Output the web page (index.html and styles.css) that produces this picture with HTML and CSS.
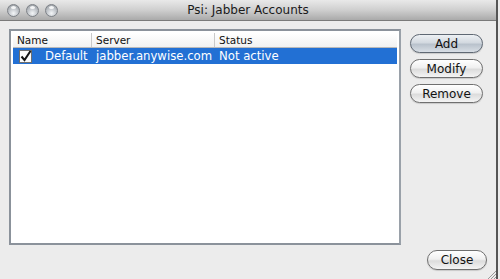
FILE: index.html
```html
<!DOCTYPE html>
<html>
<head>
  <title>Psi: Jabber Accounts</title>
  <meta charset="UTF-8">
  <link rel="stylesheet" href="styles.css">
</head>
<body>
  <div class="window">
    <div class="titlebar">
      <div class="lights">
        <span class="light"></span>
        <span class="light"></span>
        <span class="light"></span>
      </div>
      <div class="title">Psi: Jabber Accounts</div>
    </div>
    <div class="content">
      <div class="table-box">
        <div class="row header">
          <div class="cell col-name">Name</div>
          <div class="cell col-server">Server</div>
          <div class="cell col-status">Status</div>
        </div>
        <div class="row selected">
          <div class="cell col-name">
            <svg class="check" width="13" height="13" viewBox="0 0 13 13">
              <rect x="0.5" y="0.5" width="12" height="12" fill="#fafafa" stroke="#6e6e6e"/>
              <path d="M2.5 6.5 L5.5 10 L11.5 1" fill="none" stroke="#111" stroke-width="2"/>
            </svg>
            <span class="name">Default</span>
          </div>
          <div class="cell col-server">jabber.anywise.com</div>
          <div class="cell col-status">Not active</div>
        </div>
      </div>
      <div class="buttons">
        <button class="button default">Add</button>
        <button class="button">Modify</button>
        <button class="button">Remove</button>
      </div>
    </div>
    <div class="footer">
      <button class="button close">Close</button>
    </div>
    <svg class="grip" width="10" height="10" viewBox="0 0 10 10">
      <path d="M10 2 L2 10 M10 5 L5 10 M10 8 L8 10" stroke="#999" stroke-width="1"/>
    </svg>
  </div>
</body>
</html>
```

FILE: styles.css
```css
body {
  margin: 0;
  padding: 0;
  font-family: 'DejaVu Sans', 'Liberation Sans', sans-serif;
  background-color: #ececec;
}
.window {
  position: relative;
  width: 498px;
  height: 279px;
  border-right: 2px solid #555;
  background-color: #ececec;
  display: flex;
  flex-direction: column;
  box-sizing: border-box;
}
.titlebar {
  height: 21px;
  box-sizing: border-box;
  background: linear-gradient(#e9e9e9, #cfcfcf 50%, #aaaaaa);
  border-bottom: 1px solid #7a7a7a;
  display: flex;
  align-items: center;
  position: relative;
}
.lights {
  display: flex;
  gap: 6px;
  padding-left: 7px;
}
.light {
  width: 13px;
  height: 13px;
  border-radius: 50%;
  box-sizing: border-box;
  border: 1px solid #7d8187;
  background: radial-gradient(circle at 50% 75%, #f4f6f8 0%, #c4c8cd 45%, #8f949a 100%);
  position: relative;
}
.light::after {
  content: "";
  position: absolute;
  left: 3px;
  top: 1px;
  width: 5px;
  height: 3px;
  border-radius: 50%;
  background: rgba(255, 255, 255, 0.85);
}
.title {
  position: absolute;
  left: 0;
  right: 0;
  text-align: center;
  font-size: 12px;
  color: #1a1a1a;
}
.content {
  display: flex;
  padding: 8px 0 0 9px;
  height: 224px;
  box-sizing: border-box;
}
.table-box {
  width: 392px;
  height: 216px;
  box-sizing: border-box;
  border: 2px solid #8b929b;
  border-right-color: #9aa1a9;
  background-color: #fff;
  padding: 2px;
}
.row {
  display: flex;
  font-size: 11.7px;
}
.header {
  height: 15px;
  font-size: 10.5px;
  color: #111;
  background: linear-gradient(#ffffff, #f1f1f1);
  border-bottom: 1px solid #b9b9b9;
  box-sizing: border-box;
}
.header .cell {
  border-right: 1px solid #c9c9c9;
  padding-left: 4px;
  line-height: 14px;
}
.header .col-status {
  border-right: none;
}
.cell {
  box-sizing: border-box;
  white-space: nowrap;
  overflow: hidden;
}
.col-name {
  width: 79px;
}
.col-server {
  width: 123px;
}
.col-status {
  flex: 1;
}
.selected {
  height: 16px;
  background-color: #2270d4;
  color: #fff;
  line-height: 16px;
}
.selected .col-name {
  display: flex;
  align-items: center;
  padding-left: 6px;
}
.selected .col-server,
.selected .col-status {
  padding-left: 4px;
}
.check {
  flex: none;
}
.name {
  margin-left: 13px;
}
.buttons {
  display: flex;
  flex-direction: column;
  gap: 6px;
  margin-left: 9px;
  padding-top: 5px;
}
.button {
  width: 73px;
  height: 19px;
  border: 1px solid #6f6f6f;
  border-radius: 10px;
  background: linear-gradient(#ffffff, #f0f0f0 45%, #dcdcdc 55%, #f4f4f4);
  font-family: 'DejaVu Sans', 'Liberation Sans', sans-serif;
  font-size: 12px;
  color: #111;
  padding: 0;
  box-shadow: 0 1px 1px rgba(0, 0, 0, 0.15);
}
.button.default {
  background: linear-gradient(#eef1f4, #d3d9e0 45%, #b9c2cc 55%, #d8dee5);
  border-color: #5f6873;
}
.footer {
  display: flex;
  justify-content: flex-end;
  padding: 5px 9px 0 0;
}
.button.close {
  width: 60px;
  height: 20px;
}
.grip {
  position: absolute;
  right: 0;
  bottom: 0;
}
```
